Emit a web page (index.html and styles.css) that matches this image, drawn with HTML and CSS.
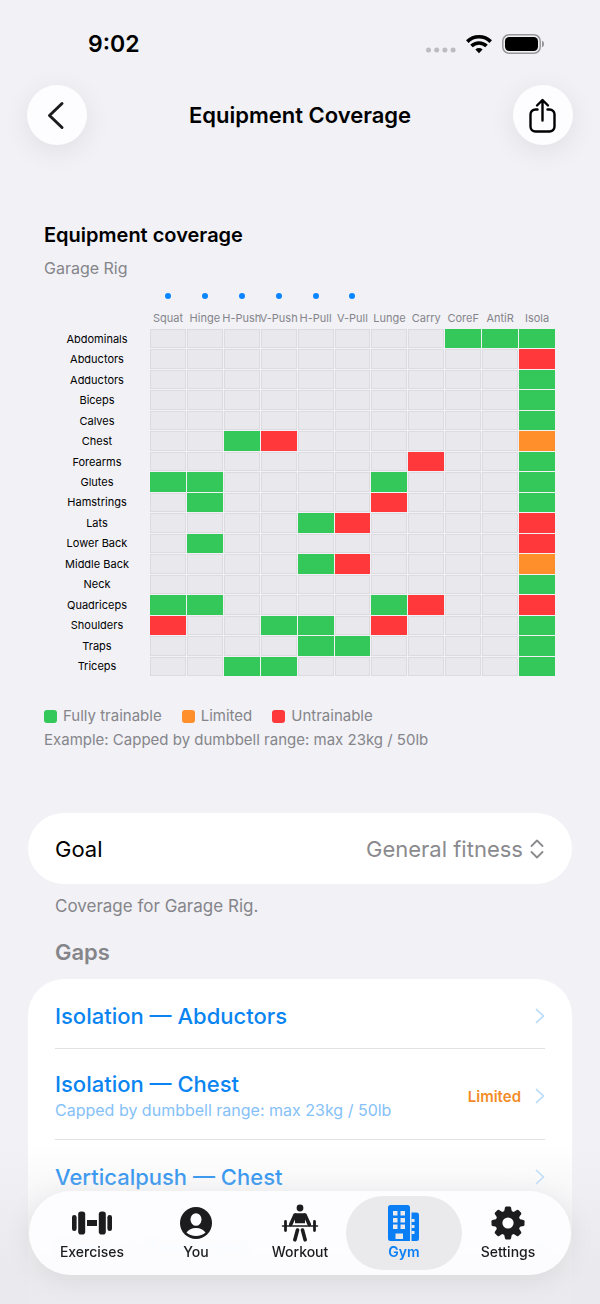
FILE: index.html
```html
<!DOCTYPE html>
<html lang="en">
<head>
  <meta charset="utf-8">
  <meta name="viewport" content="width=device-width, initial-scale=1.0">
  <title>Equipment Coverage</title>
  <link rel="stylesheet" href="styles.css">
</head>

<body>
  <div class="app">
    <div class="status-bar">
      <span class="time">9:02</span>
      <div class="status-icons">
        <svg width="30" height="18" viewBox="0 0 30 18" fill="#bcbcc1">
          <circle cx="2.5" cy="15" r="2.5"/><circle cx="10.7" cy="15" r="2.5"/><circle cx="18.9" cy="15" r="2.5"/><circle cx="27.1" cy="15" r="2.5"/>
        </svg>
        <svg width="26" height="20" viewBox="0 0 26 20" fill="none" stroke="#000" stroke-width="3.6">
          <path d="M1.3 7.6a16.6 16.6 0 0 1 23.4 0"/>
          <path d="M5.5 12.1a10.6 10.6 0 0 1 15 0"/>
          <path d="M13 19.3l-3.6-3.7a5.1 5.1 0 0 1 7.2 0z" fill="#000" stroke="none"/>
        </svg>
        <svg width="42" height="20" viewBox="0 0 42 20">
          <rect x=".8" y=".8" width="37.4" height="18.4" rx="6.2" fill="none" stroke="#97979b" stroke-width="1.5"/>
          <rect x="3" y="3" width="33" height="14" rx="4.2"/>
          <path d="M40 6.8c1.6.6 2 1.8 2 3.2s-.4 2.6-2 3.2z" fill="#97979b"/>
        </svg>
      </div>
    </div>

    <header class="nav">
      <button class="round-button" type="button" aria-label="Back">
        <svg width="30" height="30" viewBox="0 0 30 30" fill="none" stroke="#1c1c1e" stroke-width="3" stroke-linecap="round" stroke-linejoin="round">
          <path d="M20 3.5L7.5 15.5 20 27.5"/>
        </svg>
      </button>
      <h1>Equipment Coverage</h1>
      <button class="round-button" type="button" aria-label="Share">
        <svg width="34" height="38" viewBox="0 0 34 38" fill="none" stroke="#000" stroke-width="2.4" stroke-linecap="round" stroke-linejoin="round">
          <path d="M11.5 13.500H9.500A5 5 0 0 0 4.500 18.500V30.500a5 5 0 0 0 5 5h14a5 5 0 0 0 5-5V18.500a5 5 0 0 0-5-5H21.500"/>
          <path d="M16.500 24.500V4.500M11 9.500l5.500-5.500 5.500 5.500"/>
        </svg>
      </button>
    </header>

    <main>
      <section class="coverage">
        <h2>Equipment coverage</h2>
        <p class="gym-name">Garage Rig</p>
        <table class="heatmap">
          <thead><tr id="patterns"><td></td></tr></thead>
          <tbody id="muscles"></tbody>
        </table>
        <ul class="legend">
          <li><span class="swatch full"></span>Fully trainable</li>
          <li><span class="swatch limited"></span>Limited</li>
          <li><span class="swatch none"></span>Untrainable</li>
        </ul>
        <p class="example">Example: Capped by dumbbell range: max 23kg / 50lb</p>
      </section>

      <div class="card goal">
        <label for="goal">Goal</label>
        <div class="picker">
          <select id="goal">
            <option>General fitness</option>
            <option>Strength</option>
          </select>
          <svg width="14" height="20" viewBox="0 0 14 20" fill="none" stroke="#8a8a8e" stroke-width="1.8" stroke-linecap="round" stroke-linejoin="round">
            <path d="M1.500 7L7 1.500 12.500 7M1.500 13L7 18.500 12.500 13"/>
          </svg>
        </div>
      </div>
      <p class="footnote">Coverage for Garage Rig.</p>

      <h3>Gaps</h3>
      <div class="card gaps">
        <a class="gap" href="#">
          <span class="gap-title">Isolation — Abductors</span>
          <svg class="chevron" viewBox="0 0 10 16"><path d="M1.500 1.500L8.500 8l-7 6.500"/></svg>
        </a>
        <a class="gap" href="#">
          <span class="gap-title">Isolation — Chest
            <small>Capped by dumbbell range: max 23kg / 50lb</small>
          </span>
          <span class="tag">Limited</span>
          <svg class="chevron" viewBox="0 0 10 16"><path d="M1.500 1.500L8.500 8l-7 6.500"/></svg>
        </a>
        <a class="gap" href="#">
          <span class="gap-title">Verticalpush — Chest</span>
          <svg class="chevron" viewBox="0 0 10 16"><path d="M1.500 1.500L8.500 8l-7 6.500"/></svg>
        </a>
        <a class="gap" href="#">
          <span class="gap-title">Carry — Forearms</span>
          <svg class="chevron" viewBox="0 0 10 16"><path d="M1.500 1.500L8.500 8l-7 6.500"/></svg>
        </a>
      </div>
    </main>

    <div class="fade"></div>
    <nav class="tab-bar">
      <a class="tab" href="#">
        <svg width="42" height="38" viewBox="0 0 42 38" fill="#1c1c1e">
          <rect x="1" y="11" width="4.6" height="16" rx="2.2"/><rect x="7.2" y="7.5" width="7" height="23" rx="2.8"/>
          <rect x="16" y="16" width="10" height="6"/>
          <rect x="27.8" y="7.5" width="7" height="23" rx="2.8"/><rect x="36.4" y="11" width="4.6" height="16" rx="2.2"/>
        </svg>
        Exercises
      </a>
      <a class="tab" href="#">
        <svg width="34" height="38" viewBox="0 0 34 38">
          <circle cx="17" cy="19" r="16" fill="#1c1c1e"/>
          <ellipse cx="17" cy="15.5" rx="5.5" ry="6.3" fill="#fdfdff"/>
          <path d="M7.5 28.5c1.800-2.900 5.300-4.600 9.500-4.600s7.700 1.700 9.500 4.600c-2.300 2.100-5.700 3.600-9.500 3.600s-7.200-1.500-9.500-3.600z" fill="#fdfdff"/>
        </svg>
        You
      </a>
      <a class="tab" href="#">
        <svg width="38" height="38" viewBox="0 0 38 38" fill="none" stroke="#1c1c1e" stroke-linecap="round" stroke-linejoin="round">
          <circle cx="19" cy="4" r="3.4" fill="#1c1c1e" stroke="none"/>
          <path d="M14.500 9.200h9l2.500 2-2 3.500v4.500h-10v-4.500l-2-3.500z" fill="#1c1c1e" stroke="none"/>
          <path d="M14 11L9.700 20.500M24 11L28.300 20.500" stroke-width="3.6"/>
          <path d="M1.500 22h35" stroke-width="1.500"/>
          <path d="M4.500 17.500v9M33.500 17.500v9" stroke-width="2.800"/>
          <path d="M16.500 26l-2.600 9.800M21.500 26l2.600 9.800" stroke-width="3.600"/>
        </svg>
        Workout
      </a>
      <a class="tab active" href="#">
        <svg width="32" height="38" viewBox="0 0 32 38" fill="#0a7ff5">
          <path d="M2.500 1h17A2.500 2.500 0 0 1 22 3.500V37H2.500A2.500 2.500 0 0 1 0 34.500v-31A2.500 2.500 0 0 1 2.500 1z"/>
          <path d="M23.500 8.500h5A2.500 2.500 0 0 1 31 11v23.500a2.500 2.500 0 0 1-2.500 2.500h-5z"/>
          <path d="M5 7h4.500v4.500H5zM12.500 7H17v4.500h-4.500zM5 14h4.500v4.500H5zM12.500 14H17v4.500h-4.500zM5 20.500h4.500V25H5zM12.500 20.500H17V25h-4.500zM7.500 29.500h7.500V35H7.500zM23.500 15h3v3h-3zM23.500 21h3v3h-3zM23.500 27h3v3h-3z" fill="#eaeaec"/>
        </svg>
        Gym
      </a>
      <a class="tab" href="#">
        <svg width="34" height="38" viewBox="-17 -19 34 38">
          <g fill="#1c1c1e">
            <path id="teeth" d="M-4-11l1-4.500q.3-1 1.200-1h3.600q.9 0 1.200 1L4-11V11l-1 4.500q-.3 1-1.200 1h-3.600q-.9 0-1.200-1L-4 11z"/>
            <use href="#teeth" transform="rotate(45)"/>
            <use href="#teeth" transform="rotate(90)"/>
            <use href="#teeth" transform="rotate(135)"/>
            <circle r="12.500"/>
          </g>
          <circle r="5.600" fill="#fdfdff"/>
        </svg>
        Settings
      </a>
    </nav>
  </div>

  <script>
    const patterns = ["Squat", "Hinge", "H-Push", "V-Push", "H-Pull", "V-Pull", "Lunge", "Carry", "CoreF", "AntiR", "Isola"];
    const primaryCount = 6; // patterns marked with a dot

    // one character per pattern: f = full, l = limited, n = none
    const muscles = {
      "Abdominals":  "........fff",
      "Abductors":   "..........n",
      "Adductors":   "..........f",
      "Biceps":      "..........f",
      "Calves":      "..........f",
      "Chest":       "..fn......l",
      "Forearms":    ".......n..f",
      "Glutes":      "ff....f...f",
      "Hamstrings":  ".f....n...f",
      "Lats":        "....fn....n",
      "Lower Back":  ".f........n",
      "Middle Back": "....fn....l",
      "Neck":        "..........f",
      "Quadriceps":  "ff....fn..n",
      "Shoulders":   "n..ff.n...f",
      "Traps":       "....ff....f",
      "Triceps":     "..ff......f"
    };
    const levels = { f: "full", l: "limited", n: "none", ".": "blank" };

    document.getElementById("patterns").innerHTML += patterns.map((name, i) =>
      `<th scope="col"><span class="pattern${i < primaryCount ? " primary" : ""}">${name}</span></th>`
    ).join("");

    document.getElementById("muscles").innerHTML = Object.entries(muscles).map(([name, cells]) =>
      `<tr><th scope="row">${name}</th>${[...cells].map(c => `<td class="${levels[c]}"></td>`).join("")}</tr>`
    ).join("");
  </script>
</body>
</html>
```

FILE: styles.css
```css
* {
  box-sizing: border-box;
}

body {
  margin: 0;
  background-color: #f1f1f6;
  color: #000;
  font-family: Inter, "Liberation Sans", sans-serif;
}

h1, h2, h3, p, ul {
  margin: 0;
  padding: 0;
}

a {
  text-decoration: none;
}

.app {
  position: relative;
  height: 100vh;
  overflow: hidden;
}

.status-bar {
  display: flex;
  align-items: center;
  justify-content: space-between;
  height: 64px;
  padding: 24px 56px 0 88px;
}

.time {
  font-size: 23px;
  font-weight: 600;
}

.status-icons {
  display: flex;
  align-items: center;
  gap: 10px;
}

.nav {
  display: flex;
  align-items: center;
  justify-content: space-between;
  padding: 21px 27px 0;
}

.nav h1 {
  font-size: 22px;
  font-weight: 600;
  line-height: 28px;
}

.round-button {
  display: flex;
  align-items: center;
  justify-content: center;
  width: 60px;
  height: 60px;
  padding: 0;
  border: none;
  border-radius: 50%;
  background-color: #fdfdff;
  box-shadow: 0 6px 28px rgba(0, 0, 0, 0.08);
}

main {
  padding: 76px 28px 0;
}

.coverage {
  padding: 0 16px;
}

.coverage h2 {
  font-size: 20px;
  font-weight: 600;
  line-height: 28px;
}

.gym-name {
  margin-top: 8px;
  font-size: 16px;
  line-height: 22px;
  color: #85858a;
}

.heatmap {
  width: 100%;
  height: 392px;
  margin-top: 6px;
  table-layout: fixed;
  border-spacing: 1px;
}

.heatmap td, .heatmap th {
  padding: 0;
  font-size: 11px;
  font-weight: 400;
  line-height: 16px;
}

.heatmap thead td {
  width: 104px;
  height: 42px;
}

.heatmap thead th {
  color: #85858a;
  vertical-align: bottom;
}

.pattern {
  display: flex;
  flex-direction: column;
  align-items: center;
  gap: 11px;
  padding-bottom: 2px;
  white-space: nowrap;
}

.primary::before {
  content: "";
  width: 6px;
  height: 6px;
  border-radius: 50%;
  background-color: #0a84ff;
}

.heatmap tbody td {
  border: 1px solid transparent;
}

.heatmap .blank {
  background-color: #e9e9ed;
  border-color: #dcdce0;
}

.heatmap .full, .full {
  background-color: #34c759;
}

.heatmap .limited, .limited {
  background-color: #ff8f2b;
}

.heatmap .none, .none {
  background-color: #ff383c;
}

.legend {
  display: flex;
  gap: 20px;
  margin-top: 27px;
  list-style: none;
  font-size: 15px;
  line-height: 24px;
  color: #85858a;
}

.legend li {
  display: flex;
  align-items: center;
  gap: 6px;
}

.swatch {
  width: 13px;
  height: 13px;
  border-radius: 3px;
}

.example {
  font-size: 15px;
  line-height: 24px;
  color: #85858a;
}

.card {
  border-radius: 36px;
  background-color: #fff;
}

.goal {
  display: flex;
  align-items: center;
  justify-content: space-between;
  height: 71px;
  margin-top: 61px;
  padding: 0 28px 0 27px;
  font-size: 22px;
}

.picker {
  display: flex;
  align-items: center;
  gap: 7px;
}

.picker select {
  appearance: none;
  padding: 0;
  border: none;
  background: none;
  color: #8a8a8e;
  font: inherit;
}

.footnote {
  margin-top: 10px;
  padding-left: 27px;
  font-size: 17px;
  line-height: 24px;
  color: #85858a;
}

h3 {
  margin: 20px 0 13px;
  padding-left: 27px;
  font-size: 22px;
  font-weight: 600;
  line-height: 28px;
  color: #85858a;
}

.gaps {
  padding: 0 27px 60px;
}

.gap {
  display: flex;
  align-items: center;
  gap: 14px;
  min-height: 70px;
  padding: 21px 0 17px;
  border-bottom: 1px solid #e2e2e4;
  color: #0a84f0;
}

.gap-title {
  flex: 1;
  font-size: 22px;
  font-weight: 500;
  line-height: 28px;
}

.gap-title small {
  display: block;
  font-size: 16px;
  font-weight: 400;
  line-height: 24px;
  color: #85c1f8;
}

.tag {
  font-size: 15px;
  font-weight: 600;
  color: #f28c28;
}

.chevron {
  width: 10px;
  height: 16px;
  fill: none;
  stroke: #b5dafb;
  stroke-width: 1.7;
  stroke-linecap: round;
  stroke-linejoin: round;
}

.fade {
  position: absolute;
  right: 0;
  bottom: 0;
  left: 0;
  height: 160px;
  background: linear-gradient(rgba(238, 238, 242, 0), rgba(233, 233, 237, 0.92) 80%);
}

.tab-bar {
  position: absolute;
  right: 29px;
  bottom: 29px;
  left: 29px;
  display: flex;
  height: 84px;
  padding: 0 11px;
  border-radius: 42px;
  background-color: rgba(253, 253, 255, 0.95);
  box-shadow: 0 4px 28px rgba(0, 0, 0, 0.08);
  backdrop-filter: blur(3px);
}

.tab {
  position: relative;
  flex: 1;
  display: flex;
  flex-direction: column;
  align-items: center;
  padding-top: 13px;
  font-size: 14px;
  font-weight: 500;
  line-height: 20px;
  color: #1c1c1e;
}

.active {
  z-index: 0;
  color: #0a7ff5;
  font-weight: 600;
}

/* selection pill is a little wider than its tab */
.active::before {
  content: "";
  position: absolute;
  inset: 5px -6px;
  z-index: -1;
  border-radius: 37px;
  background-color: #eaeaec;
}
```
